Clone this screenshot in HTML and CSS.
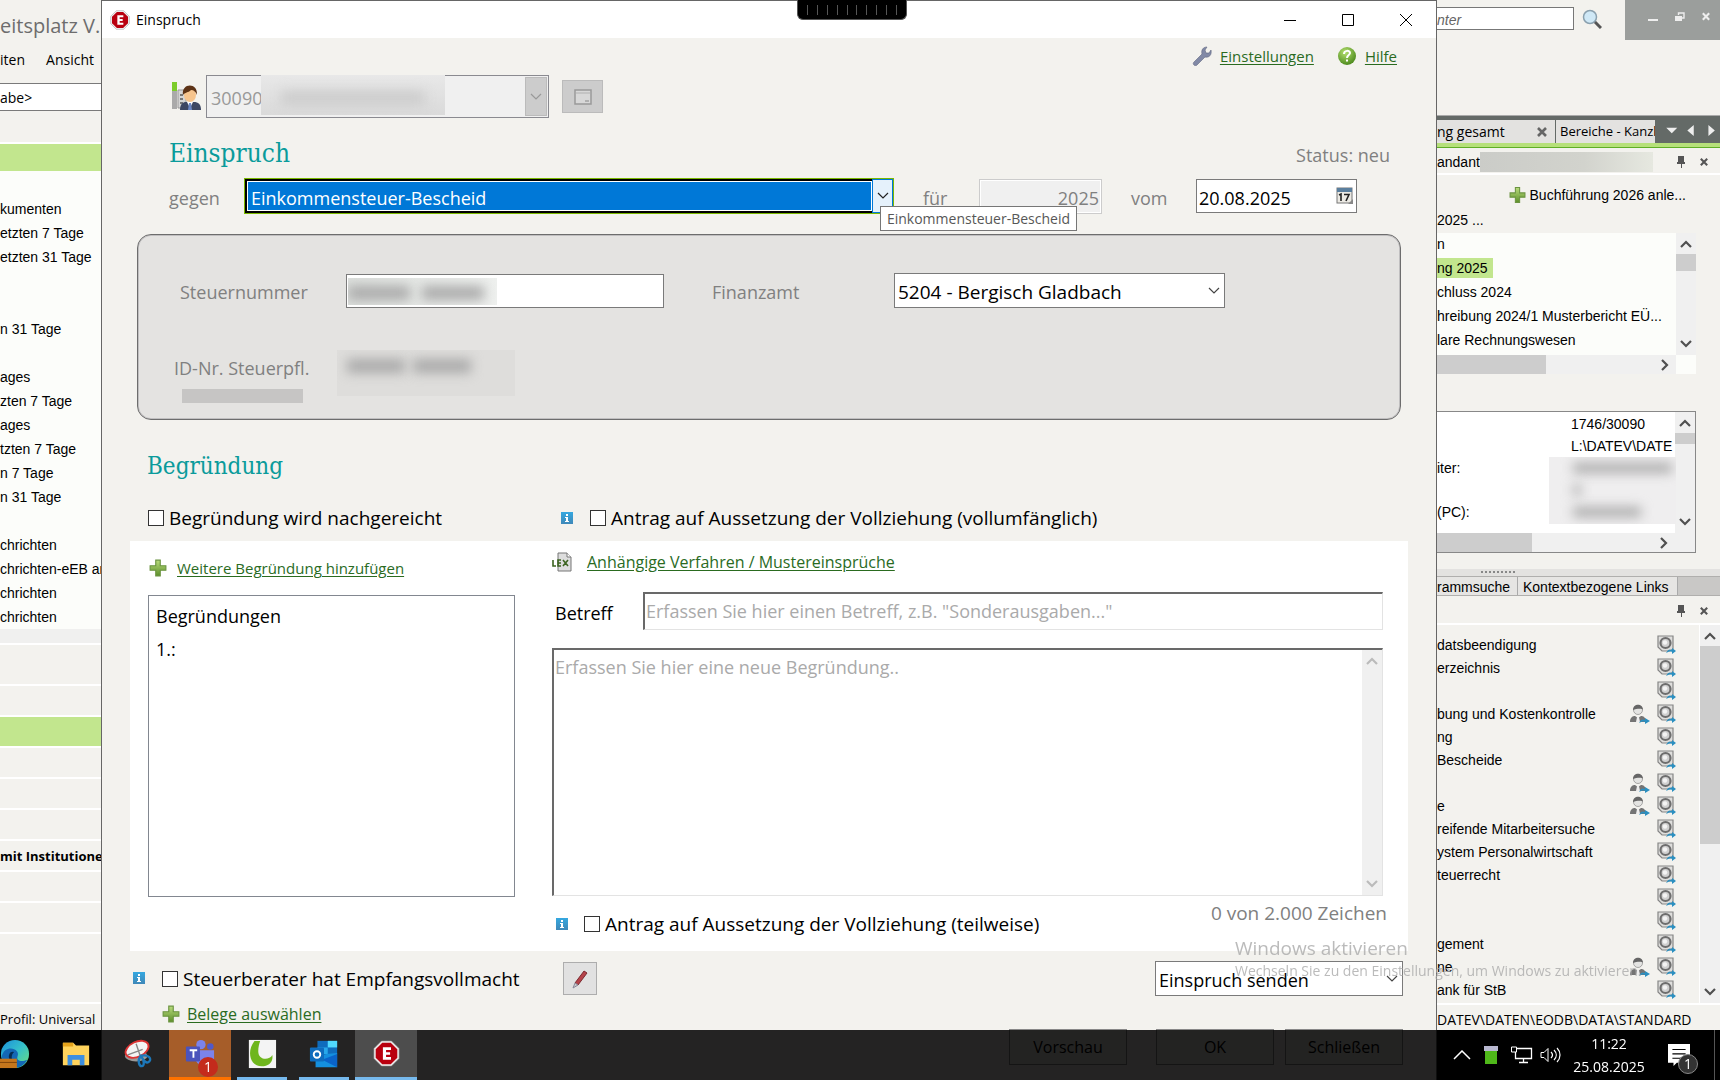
FILE: index.html
```html
<!DOCTYPE html>
<html lang="de">
<head>
<meta charset="utf-8">
<title>Einspruch</title>
<link rel="stylesheet" href="styles.css">
</head>
<body>
<svg class="defs" aria-hidden="true">
  <defs>
    <linearGradient id="g-green" x1="0" y1="0" x2="0" y2="1"><stop offset="0" stop-color="#b9dc7c"/><stop offset="1" stop-color="#5d8f2a"/></linearGradient>
    <linearGradient id="g-blue" x1="0" y1="0" x2="0" y2="1"><stop offset="0" stop-color="#35a8e0"/><stop offset="1" stop-color="#3f88b8"/></linearGradient>
    <radialGradient id="g-help" cx=".4" cy=".3" r=".8"><stop offset="0" stop-color="#b5e070"/><stop offset="1" stop-color="#3f7f12"/></radialGradient>
    <linearGradient id="g-edge" x1="0" y1="0" x2="1" y2="1"><stop offset="0" stop-color="#1b8fdc"/><stop offset=".5" stop-color="#35c1c9"/><stop offset="1" stop-color="#6fe07a"/></linearGradient>
  </defs>
  <symbol id="plus" viewBox="0 0 16 16"><path d="M6 1h4v5h5v4h-5v5H6v-5H1V6h5z" fill="url(#g-green)" stroke="#6b9440" stroke-width="1"/></symbol>
  <symbol id="info" viewBox="0 0 13 13"><rect width="12" height="12" fill="url(#g-blue)"/><path d="M5 2h2v2H5zM4 5h3v4h1v1H4V9h1V6H4z" fill="#fff"/></symbol>
  <symbol id="chev-down" viewBox="0 0 12 8"><path d="M1 1l5 5 5-5" fill="none" stroke="currentColor" stroke-width="1.2"/></symbol>
  <symbol id="chev-bold" viewBox="0 0 12 8"><path d="M1 1l5 5 5-5" fill="none" stroke="currentColor" stroke-width="2.2"/></symbol>
  <symbol id="cross" viewBox="0 0 10 10"><path d="M1 1l8 8M9 1l-8 8" stroke="currentColor" stroke-width="2.6"/></symbol>
  <symbol id="pin" viewBox="0 0 8 12"><path d="M1 0h6v6h1v2H5v4H4V8H0V6h1z" fill="currentColor"/></symbol>
  <symbol id="stop" viewBox="0 0 30 30"><path d="M9.500 1h11L29 9.500v11L20.500 29h-11L1 20.500v-11z" fill="#eee" stroke="#888" stroke-width=".6"/><path d="M10.300 3h9.400L27 10.300v9.400L19.700 27h-9.400L3 19.700v-9.400z" fill="#b9000f"/><path d="M11 8h9v3h-5.500v2.500H19v3h-4.500V19H20v3h-9z" fill="#fff"/></symbol>
  <symbol id="disc" viewBox="0 0 20 20"><path d="M1 1h15v13l-3 2H5l-4-4z" fill="#dededc" stroke="#858585" stroke-width="1.200"/><circle cx="8.500" cy="8" r="5" fill="#d0d0d0" stroke="#6e6e6e" stroke-width="2.200"/><circle cx="8" cy="7.500" r="2.200" fill="#f4f4f4"/><path d="M9 18c2-4 4-4 6-3v-2l4 3-4 3v-2c-2-1-4 0-6 1z" fill="#2b8fc0"/></symbol>
  <symbol id="person" viewBox="0 0 20 20"><path d="M0 18c0-5 3-6 5-6l3 2 3-2c2 0 5 1 5 6z" fill="#747474"/><path d="M7 13h2l1 5H6z" fill="#eee"/><circle cx="8" cy="6" r="4.500" fill="#e4e4e2" stroke="#888" stroke-width=".7"/><path d="M3 6c0-7 10-7 10 0-1-2-7-1-10 0z" fill="#666"/><path d="M9 19c2-4 4-4 6-3v-2l5 3-5 3v-2c-2-1-4 0-6 1z" fill="#2b8fc0"/></symbol>
</svg>

<div class="desktop">
  <aside class="tree">
    <p class="app-title">eitsplatz V.1</p>
    <nav class="menu"><a href="#">iten</a><a href="#">Ansicht</a></nav>
    <input class="quick" aria-label="Schnelleingabe" value="abe&gt;">
    <div class="mark top"></div>
    <ul class="tree-list">
      <li>kumenten</li><li>etzten 7 Tage</li><li>etzten 31 Tage</li><li></li><li></li><li>n 31 Tage</li><li></li>
      <li>ages</li><li>zten 7 Tage</li><li>ages</li><li>tzten 7 Tage</li><li>n 7 Tage</li><li>n 31 Tage</li><li></li>
      <li>chrichten</li><li>chrichten-eEB an</li><li>chrichten</li><li>chrichten</li>
    </ul>
    <div class="tree-end"></div>
    <ul class="groups">
      <li class="tall"></li><li></li><li class="mark"></li><li></li><li></li><li></li><li><b>mit Institutionen</b></li><li></li><li></li><li></li>
    </ul>
    <p class="status">Profil: Universal</p>
  </aside>

  <main class="dialog">
    <header class="titlebar">
      <svg class="i20"><use href="#stop"/></svg>
      <span>Einspruch</span>
      <div class="win-buttons">
        <button aria-label="Minimieren"><svg viewBox="0 0 14 14"><path d="M1 7.500h12" stroke="#000"/></svg></button>
        <button aria-label="Maximieren"><svg viewBox="0 0 14 14"><path d="M1.500 1.500h11v11h-11z" fill="none" stroke="#000"/></svg></button>
        <button aria-label="Schließen"><svg viewBox="0 0 14 14"><path d="M1 1l12 12M13 1L1 13" stroke="#000"/></svg></button>
      </div>
    </header>

    <div class="link-row">
      <svg class="i20" viewBox="0 0 20 20"><path d="M2 19c-1-1-1-2 0-3l8-8c-1-4 1-7 5-7l-2 3 1 3 3 0 2-3c1 5-2 8-6 7l-8 8c-1 1-2 1-3 0z" fill="#8189a6" stroke="#5f6680" stroke-width=".6"/></svg>
      <a href="#">Einstellungen</a>
      <svg class="i20 help" viewBox="0 0 20 20"><circle cx="10" cy="10" r="9" fill="url(#g-help)"/><path d="M7 8c0-4 6-4 6-1 0 2-3 2-3 5" fill="none" stroke="#fff" stroke-width="2"/><path d="M9 13.500h2v2H9z" fill="#fff"/></svg>
      <a href="#">Hilfe</a>
    </div>

    <div class="client-row">
      <svg class="client-icon" viewBox="0 0 30 30"><path d="M1 0h5v27H1z" fill="#aaa"/><path d="M1 0h5v9H1z" fill="#7ccc2a"/><path d="M7 8h8v18H7z" fill="#d5d5d5" stroke="#999"/><path d="M9 12h3v2H9zM9 16h3v2H9zM9 20h3v2H9z" fill="#777"/><path d="M9 28c0-6 3-8 6-8h8c4 0 7 2 7 8z" fill="#3d4763"/><path d="M16 20h6l-3 6z" fill="#fff"/><path d="M18 21h2l1 7h-4z" fill="#6c87c4"/><ellipse cx="19" cy="13" rx="6" ry="7" fill="#f6c48d"/><path d="M12 13c-2-12 15-13 14 0-1-3-3-5-6-5-3 3-6 2-8 5z" fill="#5d3316"/></svg>
      <div class="combo disabled">
        <select aria-label="Mandant" disabled><option>30090</option></select>
        <span class="drop"><svg><use href="#chev-down"/></svg></span>
        <span class="redacted client-mask"><i></i></span>
      </div>
      <button class="card-button" aria-label="Mandantendaten" disabled><svg viewBox="0 0 18 16"><rect x="1" y="1" width="16" height="14" fill="#d8d8d8" stroke="#999" stroke-width="1.500"/><path d="M2 4h14" stroke="#b0b0b0"/><path d="M11 12h4" stroke="#888"/></svg></button>
    </div>

    <div class="head-row"><h1>Einspruch</h1><span>Status: neu</span></div>

    <div class="against-row">
      <label class="l-gegen" for="art">gegen</label>
      <div class="combo focus">
        <select id="art"><option>Einkommensteuer-Bescheid</option></select>
        <span class="drop"><svg><use href="#chev-down"/></svg></span>
        <span class="tooltip" role="tooltip">Einkommensteuer-Bescheid</span>
      </div>
      <label class="l-year" for="jahr">für</label>
      <input id="jahr" class="year" value="2025" disabled>
      <label class="l-date" for="datum">vom</label>
      <div class="date"><input id="datum" value="20.08.2025">
        <svg viewBox="0 0 18 18"><rect x="1" y="1" width="15" height="15" fill="#eceae4" stroke="#777"/><path d="M1 1h15v4H1z" fill="#5b7f9e"/><path d="M3 8l2-1v7M8 7.500h5L10 14" fill="none" stroke="#222" stroke-width="1.600"/><path d="M12 17l5-5v5z" fill="#888"/></svg>
      </div>
    </div>

    <section class="tax-panel">
      <label for="stnr">Steuernummer</label>
      <div class="field-mask"><input id="stnr" value=""><span class="redacted tax-mask"><i></i><i></i></span></div>
      <label class="office-label" for="fa">Finanzamt</label>
      <div class="combo office"><select id="fa"><option>5204 - Bergisch Gladbach</option></select><span class="drop"><svg><use href="#chev-down"/></svg></span></div>
      <div class="id-label">ID-Nr. Steuerpfl.<span class="redacted name-mask"></span></div>
      <span class="redacted id-mask"><i></i><i></i></span>
    </section>

    <h2>Begründung</h2>

    <div class="check-row">
      <label class="check"><input type="checkbox">Begründung wird nachgereicht</label>
      <svg class="i13"><use href="#info"/></svg>
      <label class="check"><input type="checkbox">Antrag auf Aussetzung der Vollziehung (vollumfänglich)</label>
    </div>

    <section class="reasons">
      <div class="reason-nav">
        <div class="add-link"><svg class="i18"><use href="#plus"/></svg><a href="#">Weitere Begründung hinzufügen</a></div>
        <div class="listbox"><p>Begründungen</p><p>1.:</p></div>
      </div>
      <div class="reason-edit">
        <div class="lex-link"><svg class="i20" viewBox="0 0 20 20"><path d="M6 1h9l4 4v14H6z" fill="#ddd" stroke="#777"/><path d="M15 1v4h4" fill="#fff" stroke="#777"/><path d="M1 8v6h3M9 8H6v6h3M6 11h3M11 8l5 6M16 8l-5 6" fill="none" stroke="#3c6420" stroke-width="1.600"/></svg><a href="#">Anhängige Verfahren / Mustereinsprüche</a></div>
        <div class="subject"><label for="betreff">Betreff</label><input id="betreff" placeholder="Erfassen Sie hier einen Betreff, z.B. &quot;Sonderausgaben...&quot;"></div>
        <div class="text-wrap">
          <textarea aria-label="Begründung" placeholder="Erfassen Sie hier eine neue Begründung.."></textarea>
          <div class="scroll-v pale"><svg class="up"><use href="#chev-bold"/></svg><svg><use href="#chev-bold"/></svg></div>
        </div>
        <div class="edit-foot">
          <svg class="i13"><use href="#info"/></svg>
          <label class="check"><input type="checkbox">Antrag auf Aussetzung der Vollziehung (teilweise)</label>
          <span class="count">0 von 2.000 Zeichen</span>
        </div>
      </div>
    </section>

    <div class="foot-row">
      <svg class="i13"><use href="#info"/></svg>
      <label class="check"><input type="checkbox">Steuerberater hat Empfangsvollmacht</label>
      <button class="pencil" aria-label="Bearbeiten"><svg viewBox="0 0 18 20"><path d="M4 14L13 2l3 2L7 16z" fill="#b5434a" stroke="#7c2a30"/><path d="M4 14l3 2-5 3z" fill="#ccc" stroke="#889"/></svg></button>
      <div class="combo send"><select aria-label="Aktion"><option>Einspruch senden</option></select><span class="drop"><svg><use href="#chev-down"/></svg></span></div>
    </div>
    <div class="belege"><svg class="i18"><use href="#plus"/></svg><a href="#">Belege auswählen</a></div>
    <div class="actions"><button class="preview">Vorschau</button><button>OK</button><button>Schließen</button></div>
  </main>

  <aside class="side">
    <div class="search-row">
      <input aria-label="Suche" value="nter">
      <svg class="i20" viewBox="0 0 20 20"><path d="M12 12l7 7" stroke="#555" stroke-width="3"/><circle cx="8" cy="8" r="6.500" fill="#cfe8f6" stroke="#8aa0ae" stroke-width="1.500"/></svg>
      <div class="app-buttons">
        <svg viewBox="0 0 10 10"><path d="M0 8h10" stroke="#eee" stroke-width="2"/></svg>
        <svg viewBox="0 0 10 10"><path d="M3.500 3V1H9v5H7" fill="none" stroke="#eee" stroke-width="1.400"/><path d="M0 4h7v5H0z" fill="#eee"/></svg>
        <svg class="x"><use href="#cross"/></svg>
      </div>
    </div>
    <div class="tabs">
      <span class="tab one">ng gesamt<svg><use href="#cross"/></svg></span><span class="tab two">Bereiche - Kanzl</span>
      <svg class="arrows" viewBox="0 0 54 12"><path d="M0 3h12l-6 6zM30 0v12l-7-6zM46 0v12l7-6z" fill="#eee"/></svg>
    </div>
    <div class="pane-head"><span>andant</span><span class="redacted mandant-mask"></span><svg class="pin"><use href="#pin"/></svg><svg class="x"><use href="#cross"/></svg></div>
    <div class="new-book"><svg class="i18"><use href="#plus"/></svg><span>Buchführung 2026 anle...</span></div>
    <p class="year-line">2025 ...</p>
    <div class="orders">
      <ul><li>n</li><li><mark>ng 2025</mark></li><li>chluss 2024</li><li>hreibung 2024/1 Musterbericht EÜ...</li><li>lare Rechnungswesen</li></ul>
      <div class="scroll-v"><svg class="up"><use href="#chev-bold"/></svg><b class="thumb"></b><svg><use href="#chev-bold"/></svg></div>
      <div class="scroll-h"><b class="thumb"></b><svg><use href="#chev-bold"/></svg></div>
    </div>
    <div class="facts">
      <table>
        <tr><td></td><td>1746/30090</td></tr><tr><td></td><td>L:\DATEV\DATE</td></tr><tr><td>iter:</td><td></td></tr><tr><td></td><td></td></tr><tr><td>(PC):</td><td></td></tr>
      </table>
      <span class="redacted facts-mask"><i></i><i></i><i></i></span>
      <div class="scroll-v"><svg class="up"><use href="#chev-bold"/></svg><b class="thumb"></b><svg><use href="#chev-bold"/></svg></div>
      <div class="scroll-h"><b class="thumb"></b><svg><use href="#chev-bold"/></svg></div>
    </div>
    <div class="grip"></div>
    <div class="subtabs"><span>rammsuche</span><span>Kontextbezogene Links</span></div>
    <div class="pane-head low"><svg class="pin"><use href="#pin"/></svg><svg class="x"><use href="#cross"/></svg></div>
    <div class="links">
      <ul>
        <li><span>datsbeendigung</span><svg><use href="#disc"/></svg></li>
        <li><span>erzeichnis</span><svg><use href="#disc"/></svg></li>
        <li><span></span><svg><use href="#disc"/></svg></li>
        <li><span>bung und Kostenkontrolle</span><svg><use href="#person"/></svg><svg><use href="#disc"/></svg></li>
        <li><span>ng</span><svg><use href="#disc"/></svg></li>
        <li><span>Bescheide</span><svg><use href="#disc"/></svg></li>
        <li><span></span><svg><use href="#person"/></svg><svg><use href="#disc"/></svg></li>
        <li><span>e</span><svg><use href="#person"/></svg><svg><use href="#disc"/></svg></li>
        <li><span>reifende Mitarbeitersuche</span><svg><use href="#disc"/></svg></li>
        <li><span>ystem Personalwirtschaft</span><svg><use href="#disc"/></svg></li>
        <li><span>teuerrecht</span><svg><use href="#disc"/></svg></li>
        <li><span></span><svg><use href="#disc"/></svg></li>
        <li><span></span><svg><use href="#disc"/></svg></li>
        <li><span>gement</span><svg><use href="#disc"/></svg></li>
        <li><span>ne</span><svg><use href="#person"/></svg><svg><use href="#disc"/></svg></li>
        <li><span>ank für StB</span><svg><use href="#disc"/></svg></li>
        <li class="next"><span></span><svg><use href="#person"/></svg></li>
      </ul>
      <div class="scroll-v"><svg class="up"><use href="#chev-bold"/></svg><b class="thumb"></b><svg><use href="#chev-bold"/></svg></div>
    </div>
    <p class="status">DATEV\DATEN\EODB\DATA\STANDARD</p>
  </aside>
</div>

<div class="pill"><i></i><i></i><i></i><i></i><i></i><i></i><i></i><i></i><i></i><i></i></div>
<div class="watermark"><p>Windows aktivieren</p><p>Wechseln Sie zu den Einstellungen, um Windows zu aktivieren.</p></div>

<footer class="taskbar">
  <button class="task first" aria-label="Edge"><svg viewBox="0 0 32 32"><circle cx="16" cy="16" r="15" fill="url(#g-edge)"/><path d="M2 18c2-9 12-10 16-5 3 4-1 6 1 9 2 2 6 2 10 0-3 7-11 10-18 8C5 28 2 24 2 18z" fill="#1467b5"/><path d="M15 14c-3 2-4 8 1 12-5-1-8-6-6-10 1-2 3-3 5-2z" fill="#062c52"/><path d="M0 21h18v10H0z" fill="#c5761c"/><path d="M0 25h18" stroke="#7d430a"/></svg></button>
  <button class="task" aria-label="Explorer"><svg viewBox="0 0 32 32"><path d="M2 4h11l3 3h14v21H2z" fill="#ffd35c"/><path d="M2 4h11v4H2z" fill="#e5a31b"/><path d="M7 28V17h18v11h-5v-6h-8v6z" fill="#3d8fe0"/></svg></button>
  <button class="task" aria-label="Snipping Tool"><svg viewBox="0 0 32 32"><ellipse cx="14" cy="18" rx="12" ry="6" fill="#999"/><ellipse cx="15" cy="11" rx="13" ry="8" fill="#f4f4f4" stroke="#d33" stroke-width="2" transform="rotate(-25 15 11)"/><path d="M14 5l5 15M5 17l16-6" stroke="#888" stroke-width="1.500"/><path d="M19 18c8-2 12 3 9 6s-6-1-9-6c-4 4-2 11 1 11s3-6-1-11" fill="none" stroke="#1c78bb" stroke-width="2.500"/></svg></button>
  <button class="task teams" aria-label="Teams"><svg viewBox="0 0 32 32"><circle cx="17" cy="6" r="5" fill="#7b83eb"/><circle cx="27" cy="8" r="3.500" fill="#5059c9"/><path d="M11 12h20v9c0 10-18 11-20 0z" fill="#7b83eb"/><rect x="1" y="8" width="15" height="16" rx="1" fill="#4b53bc"/><path d="M5 12h8M9 12v8" stroke="#fff" stroke-width="2"/></svg><span>1</span></button>
  <button class="task run" aria-label="DATEV"><svg viewBox="0 0 32 32"><path d="M2 1h29v30H2z" fill="#f4f4f4"/><path d="M8 2C-1 13 3 31 18 29c7-1 10-6 9-12-3 6-15 6-15-4 0-4 1-8 2-11z" fill="#6fb61d"/></svg></button>
  <button class="task run" aria-label="Outlook"><svg viewBox="0 0 32 32"><path d="M9 2h21v14H9z" fill="#0f6cbd"/><path d="M20 2h10v7H20z" fill="#50d9ff"/><path d="M9 9h11v7H9z" fill="#28a8ea"/><path d="M7 17l23-2v15H7z" fill="#1490df"/><path d="M30 16v14L14 22z" fill="#0a63c9"/><rect x="1" y="9" width="15" height="15" rx="1" fill="#0f6cbd"/><circle cx="8.500" cy="16.500" r="3.500" fill="none" stroke="#fff" stroke-width="2"/></svg></button>
  <button class="task active" aria-label="Einspruch"><svg viewBox="0 0 30 30"><use href="#stop"/></svg></button>
  <div class="tray">
    <svg class="t-up" viewBox="0 0 18 10"><path d="M1 9l8-8 8 8" fill="none" stroke="#fff" stroke-width="1.500"/></svg>
    <svg class="t-jar" viewBox="0 0 16 20"><path d="M1 1h14v5H1z" fill="#b8b8d0"/><path d="M2 6h12v13H2z" fill="#4fb81a"/></svg>
    <svg class="t-net" viewBox="0 0 22 18"><path d="M4.500 2.500h16v10h-16zM8 16.500h9M12.500 13v3" fill="none" stroke="#fff" stroke-width="1.300"/><path d="M.5 1h5v5h-5z" fill="#000" stroke="#fff"/></svg>
    <svg class="t-vol" viewBox="0 0 22 18"><path d="M1 6.500h3l4-4v13l-4-4H1z" fill="none" stroke="#fff"/><path d="M11 6c2 2 2 4 0 6M14 4c3 3 3 7 0 10M17 2c4 4 4 10 0 14" fill="none" stroke="#fff" stroke-width="1.200"/></svg>
    <div class="clock"><span>11:22</span><span>25.08.2025</span></div>
    <div class="note"><svg viewBox="0 0 20 20"><path d="M0 0h20v17H8l-3 3v-3H0z" fill="#fff"/><path d="M4 5h12M4 9h12M4 13h8" stroke="#000"/></svg><span>1</span></div>
  </div>
</footer>
</body>
</html>
```
FILE: styles.css
```css
* { box-sizing: border-box; }
body, p, ul, h1, h2 { margin: 0; padding: 0; }
ul { list-style: none; }
body {
  --ui: "Open Sans", "Noto Sans", sans-serif;
  --paper: #f3f2ee;
  --green: #c2e68e;
  height: 100vh;
  overflow: hidden;
  background: #000;
  color: #000;
  font: 14px/20px "Liberation Sans", Arial, sans-serif;
}
button, input, select, textarea { font: inherit; color: inherit; border-radius: 0; margin: 0; }
svg { display: block; flex: none; }
.defs { position: absolute; width: 0; height: 0; }
.i13 { width: 13px; height: 13px; }
.i18 { width: 18px; height: 18px; }
.i20 { width: 20px; height: 20px; }
.desktop { display: grid; grid-template-columns: 101px minmax(0, 1fr) 283px; height: 100%; }

/* left navigation */
.tree, .side { background: var(--paper); margin-bottom: 50px; overflow: hidden; display: flex; flex-direction: column; white-space: nowrap; }
.tree > *, .side > * { flex: none; }
.app-title { font: 20px/28px var(--ui); color: #6d6d6d; padding-top: 12px; }
.menu { display: flex; justify-content: space-between; padding: 8px 7px 0 0; font: 14px/24px var(--ui); height: 43px; }
.menu a { color: #000; text-decoration: none; }
.quick { width: 100%; height: 28px; border: solid #7a7a7a; border-width: 1px 0; padding: 0; background: #fff; font: 14px/20px var(--ui); }
.mark { background: var(--green); }
.mark.top { height: 29px; margin-top: 31px; border-top: 2px solid #fff; }
.tree-list { background: #fcfdfa; padding-top: 26px; }
.tree-list li { height: 24px; line-height: 24px; }
.tree-end { height: 14px; background: #f0f0ef; }
.groups li { height: 31px; border-top: 2px solid #fff; line-height: 30px; }
.groups .tall { height: 41px; }
.groups b { font: bold 13px/28px var(--ui); }
.status { font: 14px/22px var(--ui); border-top: 2px solid #fff; margin-top: auto; padding-top: 4px; }
.tree .status { font-size: 13px; }

/* dialog */
.dialog { background: var(--paper); border: solid #666; border-width: 1px 1px 0; font: 18px/24px var(--ui); display: flex; flex-direction: column; min-width: 0; }
.dialog > * { flex: none; }
.titlebar { height: 37px; background: #fff; display: flex; align-items: center; gap: 6px; padding-left: 8px; font-size: 14px; }
.win-buttons { margin-left: auto; display: flex; padding-right: 1px; }
.win-buttons button { width: 58px; height: 30px; border: 0; background: none; display: grid; place-items: center; }
.win-buttons svg { width: 14px; height: 14px; }
.dialog a { color: #2a6b1f; font-size: 15px; text-underline-offset: 2px; }
.link-row { height: 35px; display: flex; align-items: center; justify-content: flex-end; gap: 8px; padding-right: 39px; margin-bottom: 2px; }
.help { margin-left: 15px; }
.client-row { display: flex; align-items: center; padding-left: 69px; height: 43px; }
.client-icon { width: 30px; height: 30px; margin-right: 5px; }
.combo { position: relative; background: #fff; height: 35px; border: 1px solid #7a7a7a; }
.combo select { appearance: none; width: 100%; height: 100%; border: 0; background: none; padding: 2px 24px 0 3px; display: block; opacity: 1; }
.drop { position: absolute; top: 1px; right: 1px; bottom: 1px; width: 18px; display: grid; place-items: center; pointer-events: none; color: #444; }
.drop svg { width: 12px; height: 8px; }
.disabled { width: 343px; height: 43px; background: #f0f0f0; color: #999; border-color: #8a8a90; }
.disabled select { padding-left: 4px; }
.disabled .drop { width: 22px; background: #ccc; border: 1px solid #bbb; color: #999; }
.redacted { display: block; overflow: hidden; background: #d8d8d8; }
.redacted i { display: block; filter: blur(6px); background: #aaa; }
.client-mask { position: absolute; left: 54px; top: -1px; width: 184px; height: 40px; background: linear-gradient(#e8e8e8, #dadada); }
.client-mask i { margin: 16px 20px; height: 14px; background: #ccc; }
.card-button { margin-left: 13px; width: 41px; height: 33px; border: 1px solid #bbb; background: #ccc; display: grid; place-items: center; padding: 0; }
.card-button svg { width: 18px; height: 16px; }
.head-row { display: flex; justify-content: space-between; height: 60px; padding: 19px 46px 0 67px; color: #808080; }
h1, h2 { font: 24px/36px "DejaVu Serif Condensed", "DejaVu Serif", serif; color: #0a9b9b; }
h1 { font-size: 26px; line-height: 32px; }
.head-row span { padding-top: 6px; }
.against-row { display: flex; align-items: center; height: 36px; padding: 0 79px 0 67px; color: #808080; }
.against-row label { padding-top: 3px; }
.l-gegen { width: 75px; }
.l-year { width: 85px; padding-left: 29px; }
.l-date { width: 94px; padding-left: 29px; }
.focus { flex: 1; height: 36px; border: 1px solid #7ab800; background: #fff; }
.focus select { border: 2px solid #000; border-right: 0; outline: none; background: #0078d7 content-box; padding: 1px 22px 1px 1px; color: #fff; text-indent: 3px; line-height: 32px; }
.focus .drop { top: 0; right: 0; bottom: 0; width: 21px; background: #e5f1fb; border: 1px solid #0078d7; color: #222; }
.tooltip { position: absolute; z-index: 2; right: -184px; top: 27px; border: 1px solid #767676; background: #fff; color: #575757; font-size: 14px; line-height: 23px; padding: 0 6px; white-space: nowrap; }
.year { width: 123px; height: 35px; border: 1px solid #ccc; background: #f0f0f0; box-shadow: inset 0 0 0 1px #fff; text-align: right; padding: 3px 2px 0; color: #808080; }
.date { display: flex; align-items: center; width: 161px; height: 34px; border: 1px solid #7a7a7a; background: #fff; color: #000; }
.date input { border: 0; flex: 1; min-width: 0; padding: 3px 2px 0; height: 100%; background: none; }
.date svg { width: 18px; height: 18px; margin-right: 2px; }
.tax-panel { margin: 20px 35px 0; height: 186px; border: 1px solid #6d6d6d; border-radius: 14px; background: #e4e3e1; box-shadow: inset 0 0 0 1px #c0bfc0; color: #808080; display: grid; grid-template-columns: 172px 318px 230px 331px 1fr; grid-template-rows: 35px 1fr; row-gap: 42px; align-items: center; padding: 38px 0 20px 36px; }
.tax-panel > label { padding-top: 3px; }
.tax-panel > label:first-child { padding-left: 6px; }
.tax-panel > .office-label { padding-left: 48px; }
.office { color: #000; font-size: 19px; }
.field-mask { position: relative; }
.field-mask input { display: block; width: 100%; height: 34px; border: 1px solid #7a7a7a; background: #fff; }
.tax-mask { position: absolute; left: 2px; top: 4px; width: 149px; height: 27px; background: linear-gradient(90deg, #dde0dd, #eef0ee); display: flex; gap: 12px; }
.tax-mask i { width: 62px; height: 14px; margin-top: 8px; }
.id-label { grid-column: 1; align-self: start; line-height: 36px; }
.name-mask { width: 121px; height: 14px; margin: 3px 0 0 8px; background: #c6c5c4; }
.id-mask { align-self: start; width: 178px; height: 46px; margin-left: -9px; background: #dedddb; display: flex; gap: 8px; padding: 9px 10px; }
.id-mask i { width: 58px; height: 14px; }
h2 { margin: 28px 0 18px 45px; }
.check { display: flex; align-items: center; gap: 5px; white-space: nowrap; font-size: 19px; }
.check input { appearance: none; width: 16px; height: 16px; border: 1px solid #333; background: #fff; }
.check-row { height: 39px; padding: 0 0 7px 46px; display: flex; align-items: center; }
.check-row .check:first-child { width: 413px; }
.check-row .i13 { margin-right: 16px; }
.reasons { background: #fff; margin: 0 28px; padding: 0 25px 0 18px; display: grid; grid-template-columns: minmax(0, 367fr) minmax(0, 831fr); column-gap: 37px; height: 410px; }
.add-link { height: 54px; display: flex; align-items: center; gap: 10px; padding-left: 1px; }
.listbox { height: 302px; border: 1px solid #828790; padding: 4px 7px; line-height: 33px; }
.lex-link { height: 42px; display: flex; align-items: center; gap: 15px; }
.dialog .lex-link a { font-size: 16px; }
.subject { display: flex; align-items: center; margin: 9px 0 18px; }
.subject label { width: 91px; padding: 4px 0 0 3px; }
.subject input { flex: 1; min-width: 0; height: 38px; padding: 0 1px 2px; }
.subject input, .text-wrap { border: 1px solid #e3e3e3; border-top: 2px solid #696969; border-left: 2px solid #696969; background: #fff; }
::placeholder { color: #aaa; opacity: 1; }
.text-wrap { height: 248px; display: flex; }
.text-wrap textarea { flex: 1; border: 0; resize: none; padding: 5px 0 0 1px; background: none; }
.edit-foot { display: flex; align-items: center; padding: 1px 0 0 4px; height: 55px; }
.edit-foot .i13 { margin-right: 15px; }
.count { margin: 0 -4px 22px auto; color: #808080; font-size: 19px; }
.foot-row { display: flex; align-items: center; padding: 0 33px 0 31px; margin-top: 10px; height: 35px; }
.foot-row .i13 { margin-right: 16px; }
.foot-row .check { width: 401px; }
.pencil { width: 34px; height: 33px; border: 1px solid #adadad; background: #e1e1e1; display: grid; place-items: center; padding: 0; }
.pencil svg { width: 18px; height: 20px; }
.send { width: 248px; margin-left: auto; }
.belege { height: 33px; display: flex; align-items: center; gap: 7px; padding: 2px 0 0 60px; }
.dialog .belege a { font-size: 16px; }
.actions { display: flex; justify-content: flex-end; gap: 11px; padding-right: 33px; }
.actions button { width: 118px; height: 36px; border: 1px solid #888; background: #efeeea; font-size: 16px; }
.actions .preview { margin-right: 18px; }

/* scrollbars */
.scroll-v { width: 20px; background: #f0f0f0; color: #505050; display: flex; flex-direction: column; align-items: center; padding: 7px 0; }
.scroll-v svg, .scroll-h svg { width: 12px; height: 8px; }
.scroll-v svg:last-child { margin-top: auto; }
.scroll-v .up { transform: rotate(180deg); }
.scroll-v.pale { color: #bbb; }
.thumb { display: block; background: #cdcdcd; }
.scroll-v .thumb { width: 20px; height: 17px; margin-top: 6px; }
.scroll-h { height: 19px; background: #f0f0f0; color: #505050; display: flex; align-items: center; justify-content: space-between; padding-right: 5px; grid-column: 1; }
.scroll-h .thumb { height: 19px; width: 109px; }
.scroll-h svg { transform: rotate(-90deg); }

/* right column */
.search-row { display: flex; height: 115px; align-items: flex-start; }
.search-row input { width: 137px; height: 23px; margin-top: 7px; border: 1px solid #777; border-left: 0; padding: 2px 0 0; font-style: italic; color: #666; background: #fff; }
.search-row .i20 { margin: 9px 0 0 8px; }
.app-buttons { margin-left: auto; width: 95px; height: 40px; background: #9b9e9c; color: #eee; display: flex; justify-content: space-between; padding: 12px 10px 0 23px; }
.app-buttons svg { width: 10px; height: 10px; }
.app-buttons svg:last-child { width: 8px; height: 9px; }
.tabs { height: 32px; background: #646a67; display: flex; align-items: flex-end; gap: 1px; border-bottom: 4px solid #b6e07a; border-top: 1px solid #aaa; }
.tab { height: 23px; background: #e3e2e0; font: 14px/23px var(--ui); overflow: hidden; display: flex; }
.tab.one { width: 118px; justify-content: space-between; align-items: center; padding-right: 8px; color: #000; }
.tab.one svg { width: 10px; height: 10px; color: #666; }
.tab.two { width: 99px; padding-left: 4px; font-size: 13px; }
.arrows { width: 50px; height: 11px; margin: 0 4px 7px auto; }
.pane-head { height: 28px; display: flex; align-items: center; border-bottom: 2px solid #fff; border-top: 1px solid #5fae27; color: #555; padding: 2px 12px 0 0; }
.pane-head span:first-child:not(.redacted) { color: #000; }
.pane-head .pin { width: 8px; height: 12px; margin: 0 15px 0 auto; }
.pane-head .x { width: 8px; height: 8px; }
.mandant-mask { width: 173px; height: 20px; background: linear-gradient(90deg, #cbccc8, #d2d3cd 60%, #e6e8e0); }
.new-book { display: flex; align-items: center; justify-content: flex-end; gap: 3px; padding: 6px 34px 0 0; height: 34px; }
.new-book .i18 { width: 17px; margin-right: 1px; }
.year-line { line-height: 22px; height: 24px; }
.orders, .facts { display: grid; grid-template-columns: 1fr 20px; grid-template-rows: 1fr auto; margin-right: 24px; position: relative; }
.orders { height: 141px; background: #fcfdfa; }
.orders li { height: 24px; line-height: 22px; }
.orders mark { background: var(--green); display: inline-block; line-height: 20px; padding-right: 5px; }
.facts { height: 142px; margin-top: 37px; border: 1px solid #888; border-left: 0; background: #fff; }
.facts table { border-collapse: collapse; table-layout: fixed; width: 100%; height: 110px; }
.facts td { height: 22px; padding: 2px 0 0; line-height: 20px; overflow: hidden; }
.facts td:first-child { width: 134px; }
.facts-mask { position: absolute; left: 112px; top: 45px; width: 127px; height: 67px; background: #efeeef; padding: 6px 4px 0 24px; }
.facts-mask i { height: 10px; margin-bottom: 12px; }
.facts-mask i:nth-child(2) { width: 8px; }
.facts-mask i:nth-child(3) { width: 68px; }
.facts .scroll-v .thumb { height: 11px; }
.facts .scroll-v { grid-row: 1; grid-column: 2; }
.facts .scroll-h { grid-column: 1 / 3; padding-right: 25px; }
.facts .scroll-h .thumb { width: 95px; }
.grip { height: 7px; margin-top: 16px; background: #e3e2e0; }
.grip::after { content: ""; display: block; width: 35px; height: 2px; margin: 2px 0 0 44px; background: repeating-linear-gradient(90deg, #888 0 2px, #e3e2e0 2px 4px); }
.subtabs { height: 20px; background: #c9c8c6; border: solid #b0afad; border-width: 1px 0; display: flex; line-height: 20px; }
.subtabs span { flex: none; background: #e6e5e3; border-right: 1px solid #aaa; }
.subtabs span:first-child { width: 81px; }
.subtabs span:last-child { width: 160px; padding-left: 5px; }
.pane-head.low { height: 29px; border-top: 0; }
.links { display: grid; grid-template-columns: 1fr 20px; height: 378px; overflow: hidden; }
.links ul { padding-top: 8px; border-right: 1px solid #fff; height: 378px; overflow: hidden; }
.links li { display: flex; align-items: center; height: 23px; padding-right: 22px; gap: 7px; }
.links .next { padding-right: 49px; }
.links li span { flex: 1; }
.links li svg { width: 20px; height: 20px; }
.links .thumb { height: 198px; }

/* overlays */
.pill { position: fixed; left: 797px; top: 0; width: 110px; height: 20px; background: #000; border: 1px solid #555; border-top: 0; border-radius: 0 0 6px 6px; display: flex; justify-content: space-between; padding: 5px 9px; }
.pill i { width: 1px; height: 10px; background: #555; }
.watermark { position: fixed; right: 76px; bottom: 99px; width: 409px; color: #aaaaaacc; font: 14px/20px var(--ui); white-space: nowrap; }
.watermark p:first-child { font-size: 19px; line-height: 26px; }

/* taskbar */
.taskbar { position: fixed; left: 0; right: 0; bottom: 0; height: 50px; background: rgba(0, 0, 0, .856); color: #fff; display: flex; font: 14px/22px var(--ui); }
.task { width: 62px; height: 50px; border: 0; border-bottom: 3px solid transparent; background: none; padding: 0; display: grid; place-items: center; position: relative; flex: none; }
.task svg { width: 30px; height: 30px; }
.task.first { width: 45px; justify-content: start; }
.task.teams { background: #a65d29; border-color: #ff7200; }
.task.teams span { position: absolute; right: 13px; bottom: 0; width: 20px; height: 20px; border-radius: 50%; background: #c42b1c; line-height: 20px; }
.task.run::after { content: ""; position: absolute; left: 6px; right: 6px; bottom: -3px; height: 3px; background: #76b9ed; }
.task.active { background: #4d4d4d; border-color: #76b9ed; }
.task.active svg { width: 27px; height: 27px; }
.tray { margin-left: auto; display: flex; align-items: center; border-right: 1px solid #555; margin-right: 5px; }
.t-up { width: 18px; height: 10px; margin-right: 12px; }
.t-jar { width: 16px; height: 20px; margin-right: 12px; }
.t-net { width: 22px; height: 18px; margin-right: 7px; }
.t-vol { width: 22px; height: 18px; margin-right: 10px; }
.clock { width: 74px; display: flex; flex-direction: column; align-items: center; font-size: 14px; line-height: 23px; }
.note { position: relative; margin: 0 24px 0 22px; }
.note svg { width: 22px; height: 22px; }
.note span { position: absolute; left: 10px; top: 10px; width: 20px; height: 20px; border-radius: 50%; background: #333; border: 1px solid #888; text-align: center; line-height: 18px; }
```
